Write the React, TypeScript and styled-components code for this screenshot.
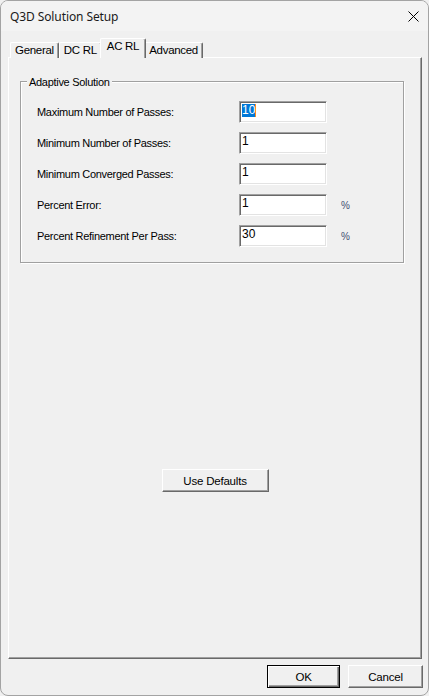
import React from "react";
import styled, { createGlobalStyle } from "styled-components";

const GlobalStyle = createGlobalStyle`
  html, body { margin: 0; padding: 0; background: #f0f0f0; }
  body { width: 429px; height: 696px; overflow: hidden; }
  * { box-sizing: border-box; }
`;

const Window = styled.div`
  width: 429px;
  height: 696px;
  border: 1px solid #a3a3a3;
  border-radius: 8px;
  overflow: hidden;
  background: #f0f0f0;
  display: flex;
  flex-direction: column;
  font-family: "Liberation Sans", Arial, sans-serif;
  font-size: 11px;
  letter-spacing: -0.3px;
  color: #000;
`;

const TitleBar = styled.div`
  height: 30px;
  flex: none;
  background: #f3f3f3;
  display: flex;
  align-items: center;
  justify-content: space-between;
  padding-left: 9px;
`;

const Title = styled.span`
  font-family: "Noto Sans", "Open Sans", sans-serif;
  font-size: 12px;
  letter-spacing: -0.1px;
  color: #1a1a1a;
`;

const CloseBox = styled.div`
  width: 30px;
  height: 30px;
  display: flex;
  align-items: center;
  justify-content: center;
`;

const Body = styled.div`
  flex: 1;
  display: flex;
  flex-direction: column;
  padding: 8px 6px 7px 7px;
  min-height: 0;
`;

const TabStrip = styled.div`
  display: flex;
  align-items: flex-end;
  height: 19px;
  padding-left: 2px;
  position: relative;
  z-index: 1;
  margin-bottom: -1px;
`;

const Tab = styled.div<{ $active?: boolean }>`
  height: ${(p) => (p.$active ? "20px" : "16px")};
  padding: 1px ${(p) => (p.$active ? "6px" : "4px")} 0;
  margin: 0 ${(p) => (p.$active ? "-2px" : "0")};
  position: relative;
  z-index: ${(p) => (p.$active ? 2 : 1)};
  line-height: 13px;
  font-size: 11.5px;
  background: #f0f0f0;
  border-top: 1px solid #fff;
  border-left: 1px solid #fff;
  border-right: 1px solid #696969;
  border-top-left-radius: 2px;
  border-top-right-radius: 2px;
  box-shadow: inset -1px 0 #a0a0a0;
  white-space: nowrap;
`;

const Panel = styled.div`
  flex: 1;
  display: flex;
  flex-direction: column;
  border-top: 1px solid #fff;
  border-left: 1px solid #fff;
  border-right: 1px solid #696969;
  border-bottom: 1px solid #696969;
  box-shadow: inset -1px -1px #a0a0a0;
  padding: 23px 17px 0 11px;
`;

const GroupBox = styled.div`
  position: relative;
  border: 1px solid #a0a0a0;
  box-shadow: inset 1px 1px #fff, 1px 1px #fff;
  padding: 19px 0 15px 16px;
`;

const Legend = styled.span`
  position: absolute;
  top: -7px;
  left: 6px;
  padding: 0 2px;
  background: #f0f0f0;
  line-height: 14px;
`;

const FieldGrid = styled.div`
  display: grid;
  grid-template-columns: 188px 88px auto;
  column-gap: 14px;
  row-gap: 9px;
  align-items: center;
`;

const FieldLabel = styled.span`
  line-height: 13px;
  white-space: nowrap;
`;

const TextBox = styled.div`
  height: 22px;
  background: #fff;
  border-style: solid;
  border-width: 1px;
  border-color: #a0a0a0 #fff #fff #a0a0a0;
  box-shadow: inset 1px 1px #696969, inset -1px -1px #e3e3e3;
  padding: 2px 0 0 2px;
  font-size: 12px;
  letter-spacing: 0;
  line-height: 13px;
`;

const Selected = styled.span`
  background: #0078d7;
  color: #fff;
  display: inline-block;
  border-right: 1px solid #ff8c1a;
`;

const Unit = styled.span`
  font-size: 10px;
  letter-spacing: 0;
  color: #3f4d70;
`;

const CenterRow = styled.div`
  display: flex;
  justify-content: center;
  margin-top: 206px;
  margin-right: -6px;
`;

const Button = styled.button<{ $w: number; $default?: boolean }>`
  width: ${(p) => p.$w}px;
  height: 23px;
  padding: 0;
  background: #f0f0f0;
  font-family: "Liberation Sans", Arial, sans-serif;
  font-size: 11.5px;
  letter-spacing: -0.2px;
  color: #000;
  border-style: solid;
  border-width: 1px;
  border-color: ${(p) =>
    p.$default ? "#000" : "#fff #696969 #696969 #fff"};
  box-shadow: ${(p) =>
    p.$default
      ? "inset 1px 1px #fff, inset -1px -1px #696969, inset -2px -2px #a0a0a0"
      : "inset -1px -1px #a0a0a0"};
`;

const Footer = styled.div`
  display: flex;
  justify-content: flex-end;
  gap: 8px;
  margin-top: 6px;
  margin-right: -1px;
`;

const fields: { label: string; value: string; unit?: string; selected?: boolean }[] = [
  { label: "Maximum Number of Passes:", value: "10", selected: true },
  { label: "Minimum Number of Passes:", value: "1" },
  { label: "Minimum Converged Passes:", value: "1" },
  { label: "Percent Error:", value: "1", unit: "%" },
  { label: "Percent Refinement Per Pass:", value: "30", unit: "%" },
];

export default function App() {
  return (
    <>
      <GlobalStyle />
      <Window>
        <TitleBar>
          <Title>Q3D Solution Setup</Title>
          <CloseBox>
            <svg width="11" height="11" viewBox="0 0 11 11">
              <path d="M0.5 0.5 L10.5 10.5 M10.5 0.5 L0.5 10.5" stroke="#000" strokeWidth="1" />
            </svg>
          </CloseBox>
        </TitleBar>
        <Body>
          <TabStrip>
            <Tab>General</Tab>
            <Tab>DC RL</Tab>
            <Tab $active>AC RL</Tab>
            <Tab>Advanced</Tab>
          </TabStrip>
          <Panel>
            <GroupBox>
              <Legend>Adaptive Solution</Legend>
              <FieldGrid>
                {fields.map((f) => (
                  <React.Fragment key={f.label}>
                    <FieldLabel>{f.label}</FieldLabel>
                    <TextBox>{f.selected ? <Selected>{f.value}</Selected> : f.value}</TextBox>
                    <Unit>{f.unit ?? ""}</Unit>
                  </React.Fragment>
                ))}
              </FieldGrid>
            </GroupBox>
            <CenterRow>
              <Button $w={107}>Use Defaults</Button>
            </CenterRow>
          </Panel>
          <Footer>
            <Button $w={73} $default>OK</Button>
            <Button $w={75}>Cancel</Button>
          </Footer>
        </Body>
      </Window>
    </>
  );
}
